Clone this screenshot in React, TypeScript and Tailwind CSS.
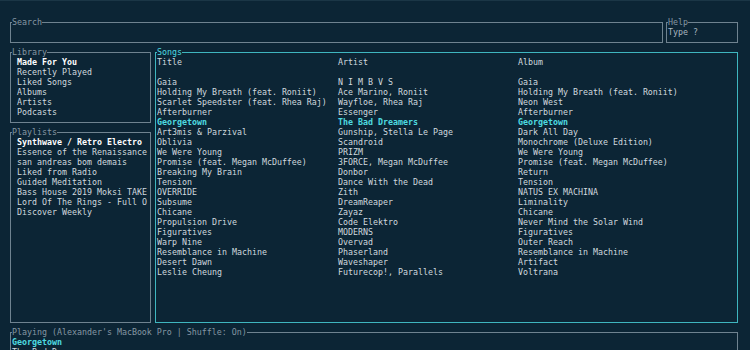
const songs: [string, string, string][] = [
  ["Gaia", "N I M B V S", "Gaia"],
  ["Holding My Breath (feat. Roniit)", "Ace Marino, Roniit", "Holding My Breath (feat. Roniit)"],
  ["Scarlet Speedster (feat. Rhea Raj)", "Wayfloe, Rhea Raj", "Neon West"],
  ["Afterburner", "Essenger", "Afterburner"],
  ["Georgetown", "The Bad Dreamers", "Georgetown"],
  ["Art3mis & Parzival", "Gunship, Stella Le Page", "Dark All Day"],
  ["Oblivia", "Scandroid", "Monochrome (Deluxe Edition)"],
  ["We Were Young", "PRIZM", "We Were Young"],
  ["Promise (feat. Megan McDuffee)", "3FORCE, Megan McDuffee", "Promise (feat. Megan McDuffee)"],
  ["Breaking My Brain", "Donbor", "Return"],
  ["Tension", "Dance With the Dead", "Tension"],
  ["OVERRIDE", "Zith", "NATUS EX MACHINA"],
  ["Subsume", "DreamReaper", "Liminality"],
  ["Chicane", "Zayaz", "Chicane"],
  ["Propulsion Drive", "Code Elektro", "Never Mind the Solar Wind"],
  ["Figuratives", "MODERNS", "Figuratives"],
  ["Warp Nine", "Overvad", "Outer Reach"],
  ["Resemblance in Machine", "Phaserland", "Resemblance in Machine"],
  ["Desert Dawn", "Waveshaper", "Artifact"],
  ["Leslie Cheung", "Futurecop!, Parallels", "Voltrana"],
];

const library = ["Made For You", "Recently Played", "Liked Songs", "Albums", "Artists", "Podcasts"];

const playlists = [
  "Synthwave / Retro Electro",
  "Essence of the Renaissance",
  "san andreas bom demais",
  "Liked from Radio",
  "Guided Meditation",
  "Bass House 2019 Moksi TAKE",
  "Lord Of The Rings - Full O",
  "Discover Weekly",
];

const Box = ({
  title,
  active = false,
  className = "",
  children,
}: {
  title: string;
  active?: boolean;
  className?: string;
  children?: React.ReactNode;
}) => (
  <fieldset
    className={`min-w-0 border pb-[5px] ${active ? "border-[#3fb6bf]" : "border-[#6f8390]"} ${className}`}
  >
    <legend className={`ml-[1px] px-0 leading-[10px] ${active ? "text-[#4fdbe0]" : "text-[#8597a3]"}`}>
      {title}
    </legend>
    {children}
  </fieldset>
);

export default function App() {
  return (
    <div
      className="w-[750px] h-[350px] overflow-hidden bg-[#0c2535] border-t border-[#1b3646] text-[#d0d9df] text-[8.3px] leading-[10px]"
      style={{ fontFamily: '"DejaVu Sans Mono", "Liberation Mono", monospace' }}
    >
      <div className="flex flex-col gap-[4px] pt-[16px] pl-[10px] w-[738px]">
        <div className="flex gap-[3px]">
          <Box title="Search" className="h-[26px] flex-1">
            <div className="h-[10px]" />
          </Box>
          <Box title="Help" className="h-[26px] w-[72px]">
            <div className="pl-[1px] text-[#a9b7c0]">Type ?</div>
          </Box>
        </div>

        <div className="flex gap-[4px]">
          <div className="flex flex-col gap-[4px] w-[141px]">
            <Box title="Library" className="h-[76px]">
              <ul className="pl-[6px] whitespace-nowrap overflow-hidden">
                {library.map((l, i) => (
                  <li key={l} className={i === 0 ? "font-bold text-white" : ""}>
                    {l}
                  </li>
                ))}
              </ul>
            </Box>
            <Box title="Playlists" className="h-[196px]">
              <ul className="pl-[6px] whitespace-nowrap overflow-hidden">
                {playlists.map((p, i) => (
                  <li key={p} className={i === 0 ? "font-bold text-white" : ""}>
                    {p}
                  </li>
                ))}
              </ul>
            </Box>
          </div>

          <Box title="Songs" active className="h-[276px] flex-1">
            <div className="grid grid-cols-[181px_180px_1fr] pl-[1px] whitespace-nowrap">
              <div>Title</div>
              <div>Artist</div>
              <div>Album</div>
              <div className="col-span-3 h-[10px]" />
              {songs.map(([t, a, al]) => {
                const cur = t === "Georgetown";
                const cls = cur ? "font-bold text-[#4fdbe0]" : "";
                return [
                  <div key={t + "t"} className={cls}>{t}</div>,
                  <div key={t + "a"} className={cls}>{a}</div>,
                  <div key={t + "al"} className={cls}>{al}</div>,
                ];
              })}
            </div>
          </Box>
        </div>

        <Box title="Playing (Alexander's MacBook Pro | Shuffle: On)" className="h-[40px]">
          <div className="pl-[1px]">
            <div className="font-bold text-[#4fdbe0]">Georgetown</div>
            <div>The Bad Dreamers</div>
          </div>
        </Box>
      </div>
    </div>
  );
}
